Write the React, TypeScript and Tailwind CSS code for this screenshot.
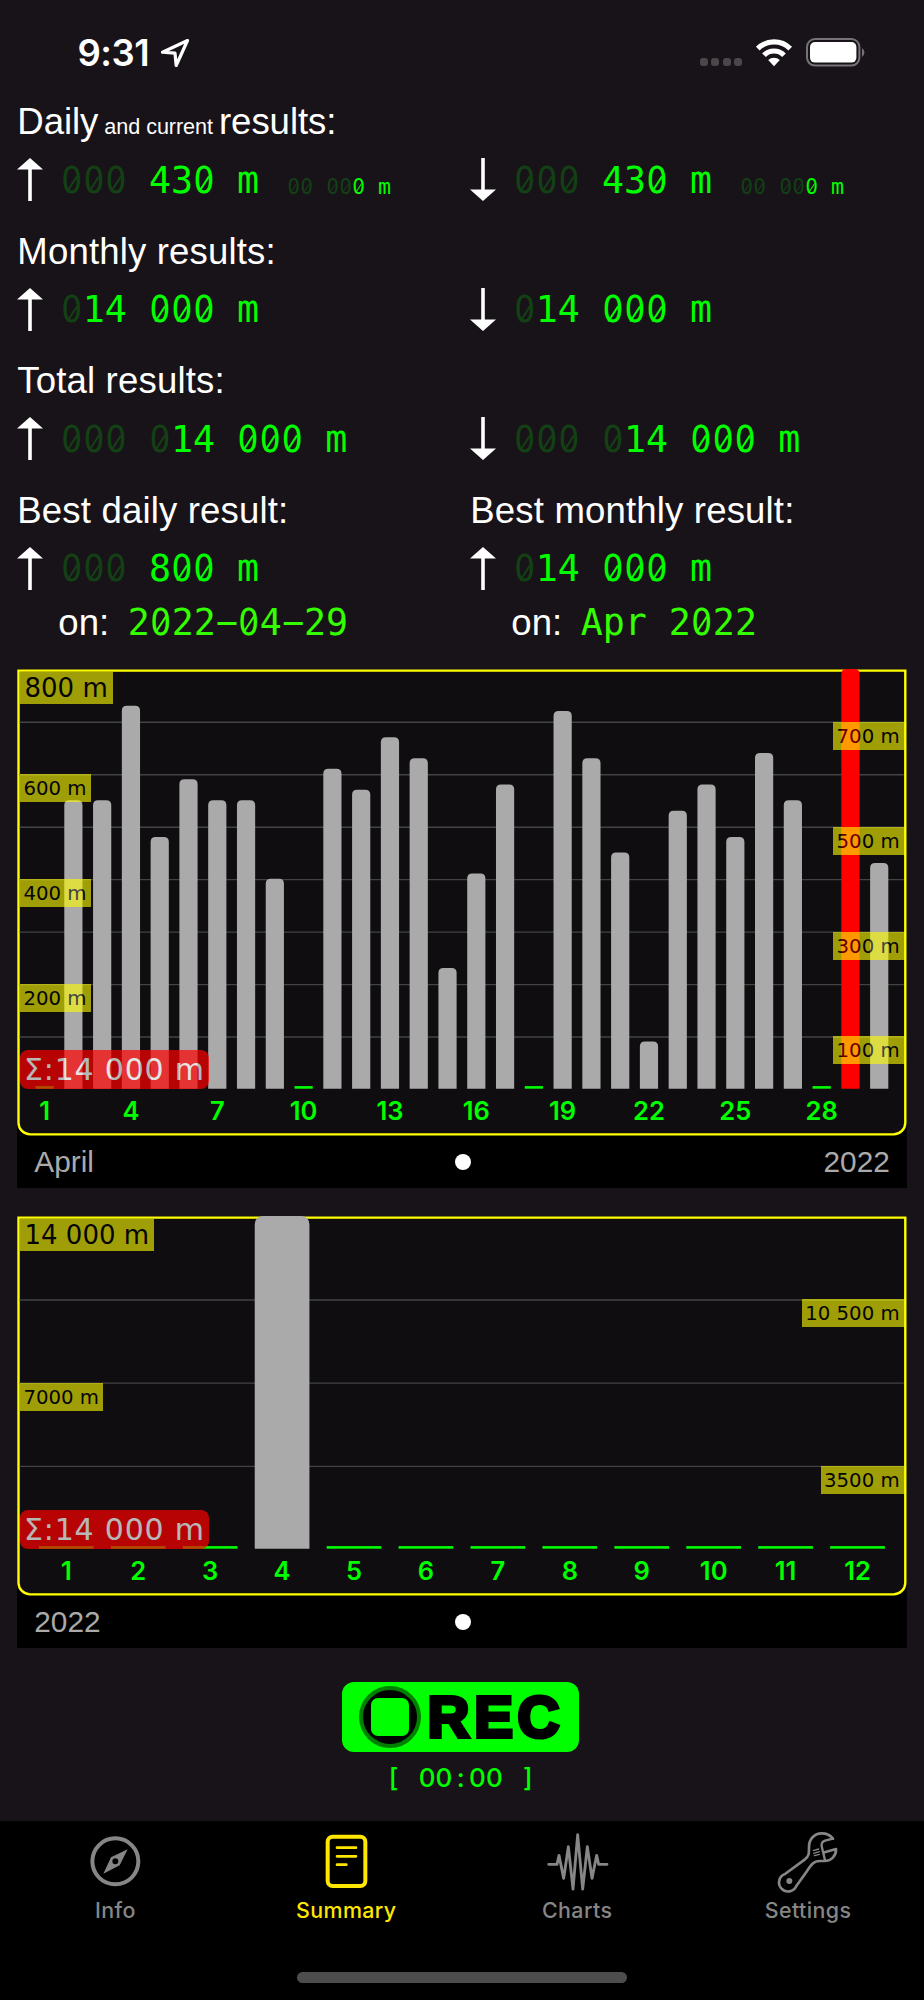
import type { ReactNode } from "react";

const DAILY = [
  0, 550, 550, 730, 480, 590, 550, 550, 400, 0, 610, 570, 670, 630, 230, 410,
  580, 0, 720, 630, 450, 90, 530, 580, 480, 640, 550, 0, 800, 430,
];
const MONTHLY = [0, 0, 0, 14000, 0, 0, 0, 0, 0, 0, 0, 0];

function StatusBar() {
  return (
    <header className="flex h-[98px] shrink-0 items-start justify-between pl-[77.5px] pr-[58px] pt-[30px]">
      <div className="flex items-center gap-[11px]">
        <span className="font-['Inter'] text-[36.5px] font-semibold leading-[46px] tracking-[-0.5px]">
          9:31
        </span>
        <svg width="30" height="30" viewBox="0 0 30 30" fill="none">
          <path
            d="M27.5 2.5 2.5 14.2 15 15.2 16.2 27.5Z"
            stroke="white"
            strokeWidth="3.2"
            strokeLinejoin="round"
          />
        </svg>
      </div>
      <div className="flex items-end pt-2">
        <div className="mr-[13px] flex gap-[3.5px] pb-[1px]">
          {[0, 1, 2, 3].map((dot) => (
            <span key={dot} className="size-2 rounded-[3px] bg-[#4a474b]" />
          ))}
        </div>
        <svg width="38" height="29" viewBox="0 0 38 29" fill="none" stroke="white" strokeWidth="5.2">
          <path d="M2.8 10.6a23 23 0 0 1 32.4 0" />
          <path d="M9 17.2a14 14 0 0 1 20 0" />
          <path d="M19 28.2 13.2 22a8.6 8.6 0 0 1 11.6 0Z" fill="white" stroke="none" />
        </svg>
        <svg className="ml-[13px]" width="60" height="29" viewBox="0 0 60 29">
          <rect x="1" y="1" width="52.4" height="26.6" rx="8" fill="none" stroke="#757377" strokeWidth="2" />
          <rect x="4" y="4" width="46.4" height="20.6" rx="5" fill="white" />
          <path d="M56 10v9a5.4 5.4 0 0 0 0-9Z" fill="#757377" />
        </svg>
      </div>
    </header>
  );
}

function Arrow({ down = false }: { down?: boolean }) {
  return (
    <svg className={down ? "shrink-0 rotate-180" : "shrink-0"} width="26" height="43" viewBox="0 0 26 43" fill="white">
      <path d="M13 0 26 11.4H14.8V43h-3.6V11.4H0Z" />
    </svg>
  );
}

/* Monospaced digits, every zero gets a slash */
function Digits({ text }: { text: string }) {
  return (
    <>
      {text.split("").map((char, i) =>
        char === "0" ? (
          <span
            key={i}
            className="relative inline-block w-[0.602em] text-center font-['DejaVu_Sans_Condensed'] before:absolute before:left-[0.27em] before:top-[0.34em] before:h-[0.5em] before:w-[0.065em] before:rotate-[33deg] before:bg-current before:content-['']"
          >
            0
          </span>
        ) : (
          char
        ),
      )}
    </>
  );
}

type ReadoutProps = { dim: string; value: string; small?: boolean };

function Readout({ dim, value, small = false }: ReadoutProps) {
  return (
    <span
      className={
        small
          ? "ml-7 translate-y-[1px] whitespace-pre font-['DejaVu_Sans_Mono'] text-[21.6px] leading-none text-[#00ff00]"
          : "whitespace-pre font-['DejaVu_Sans_Mono'] text-[36.6px] leading-none text-[#00ff00]"
      }
    >
      <span className="text-[#134014]">
        <Digits text={dim} />
      </span>
      <Digits text={value} />
    </span>
  );
}

type ResultProps = {
  title?: ReactNode;
  down?: boolean;
  dim: string;
  value: string;
  current?: boolean;
  on?: string;
};

function Result({ title, down, dim, value, current, on }: ResultProps) {
  return (
    <div className="w-[453px] shrink-0">
      <h2 className="h-[47px] whitespace-nowrap text-[36.6px] leading-[47px] tracking-[0.15px]">{title}</h2>
      <div className="flex h-[69px] items-center gap-[17.5px]">
        <Arrow down={down} />
        <div className="flex items-baseline pt-[3px]">
          <Readout dim={dim} value={value} />
          {current && <Readout dim="00 00" value="0 m" small />}
        </div>
      </div>
      {on && (
        <div className="flex h-10 items-center gap-[18.5px] pl-[41px] text-[36.6px] leading-10">
          <span>on:</span>
          <span className="whitespace-pre font-['DejaVu_Sans_Mono'] text-[#33ff00]">
            <Digits text={on} />
          </span>
        </div>
      )}
    </div>
  );
}

type Badge = { text: string; at: number; right?: boolean };

type ChartProps = {
  values: number[];
  max: number;
  height: number;
  first: number;
  pitch: number;
  barWidth: number;
  radius: number;
  lines: number;
  labelEvery: number;
  best?: number;
  badges: Badge[];
  left: string;
  right?: string;
};

function Chart(props: ChartProps) {
  const { values, max, height, first, pitch, barWidth, radius, lines, labelEvery, best, badges, left, right } = props;
  const base = height - 47;
  const y = (value: number) => base - (value / max) * base;

  return (
    <section className="w-[889.5px] bg-black">
      <div className="relative bg-[#0f0d10]" style={{ height }}>
        <svg className="block overflow-visible" width="889.5" height={height}>
          <path d={`M0 ${height - 13}V${height}H889.5V${height - 13}Z`} fill="#000" />
          <path
            d={`M1.5 1.6H888.3V${height - 13}a11.7 11.7 0 0 1 -11.7 11.7H13.2a11.7 11.7 0 0 1 -11.7 -11.7Z`}
            fill="#0f0d10"
            stroke="#ffff00"
            strokeWidth="2.4"
          />
          {Array.from({ length: lines - 1 }, (_, i) => (
            <line
              key={i}
              x1="2.7"
              x2="886.8"
              y1={(base / lines) * (i + 1) + 0.8}
              y2={(base / lines) * (i + 1) + 0.8}
              stroke="#434244"
              strokeWidth="1.4"
            />
          ))}
          {values.map((value, i) => {
            const x = first + i * pitch - barWidth / 2;
            if (value === 0) {
              return <rect key={i} x={x} y={base - 2.6} width={barWidth} height="2.6" fill="#00ff00" />;
            }
            return (
              <path
                key={i}
                d={`M${x} ${base}V${y(value) + radius}q0 ${-radius} ${radius} ${-radius}h${barWidth - radius * 2}q${radius} 0 ${radius} ${radius}V${base}Z`}
                fill={i === best ? "#ff0000" : "#aaaaaa"}
              />
            );
          })}
          {values.map((_, i) =>
            i % labelEvery === 0 ? (
              <text
                key={i}
                x={first + i * pitch}
                y={base + 31}
                textAnchor="middle"
                className="fill-[#00ff00] font-['Inter'] text-[25.5px] font-semibold"
              >
                {i + 1}
              </text>
            ) : null,
          )}
        </svg>
        {badges.map(({ text, at, right: onRight }) => (
          <span
            key={text}
            className={
              at === max
                ? "absolute left-[2.7px] h-8 whitespace-pre bg-[#ffff00] pl-[4.5px] pr-[5px] font-['DejaVu_Sans'] text-[26px] leading-8 text-black opacity-60"
                : onRight
                  ? "absolute right-[2.2px] h-7 whitespace-pre bg-[#ffff00] pl-[3.5px] pr-[5px] font-['DejaVu_Sans'] text-[19.7px] leading-[29px] text-black opacity-60"
                  : "absolute left-[2.7px] h-7 whitespace-pre bg-[#ffff00] pl-[3.5px] pr-[4px] font-['DejaVu_Sans'] text-[19.7px] leading-[29px] text-black opacity-60"
            }
            style={{ top: at === max ? 2.7 : y(at) }}
          >
            {text}
          </span>
        ))}
        <span
          className="absolute left-[2.7px] h-[39px] w-[189px] whitespace-pre rounded-lg bg-[#ff0000] pl-[4px] font-['DejaVu_Sans'] text-[30px] leading-[39px] tracking-[0.8px] text-white opacity-70"
          style={{ top: base - 39 }}
        >
          Σ:14 000 m
        </span>
      </div>
      <div className="grid h-[52px] grid-cols-3 items-center px-[17px] text-[29.8px] text-[#aaaaaa]">
        <span>{left}</span>
        <span className="ml-[2px] size-[16.6px] justify-self-center rounded-full bg-white" />
        <span className="text-right">{right}</span>
      </div>
    </section>
  );
}

function RecordButton() {
  return (
    <div className="mt-[34px] flex flex-col items-center pr-[2.6px]">
      <button className="flex h-[70px] w-[237.5px] items-center rounded-xl bg-[#00ff00] pl-[17.5px] text-black">
        <span className="flex size-[62px] shrink-0 items-center justify-center rounded-full border-4 border-[#008000] bg-black">
          <span className="size-[38px] rounded-[7px] bg-[#00ff00]" />
        </span>
        <span className="ml-[6px] text-[58px] font-bold leading-[70px] tracking-[4.8px] [-webkit-text-stroke:4px_black]">
          REC
        </span>
      </button>
      <div className="mt-[8.5px] flex font-['Inter'] text-[26px] font-medium leading-[36px] text-[#00ff00]">
        {"[ 00:00 ]".split("").map((char, i) => (
          <span key={i} className="w-[16.8px] whitespace-pre text-center">
            {char}
          </span>
        ))}
      </div>
    </div>
  );
}

const TABS = [
  {
    label: "Info",
    icon: (
      <>
        <circle cx="100" cy="100" r="69" strokeWidth="12" />
        <path
          d="M137 64 113 112 64 137 87 88ZM100 91a9 9 0 1 0 0 18a9 9 0 1 0 0-18Z"
          fill="currentColor"
          fillRule="evenodd"
          stroke="none"
        />
      </>
    ),
  },
  {
    label: "Summary",
    icon: (
      <>
        <rect x="44" y="26" width="113" height="148" rx="15" strokeWidth="12" />
        <path d="M72 59h57M72 85h57M72 110h28" strokeWidth="8" />
      </>
    ),
  },
  {
    label: "Charts",
    icon: (
      <path
        d="M14 109H39L45 82 59 151 73 56 87 183 101 20 116 183 130 56 144 151 158 82 164 109H189"
        strokeWidth="8.5"
      />
    ),
  },
  {
    label: "Settings",
    icon: (
      <>
        <path
          d="M174 32C166 21 154 16 140 16C118 16 102 34 102 56C102 78 102 84 90 94L30 138A27 27 0 1 0 64 174L94 132C108 110 116 99 134 99H148C170 99 184 82 183 63L149 73"
          strokeWidth="8"
        />
        <path d="M174 32 150 38Q138 42 140 55L150 97" strokeWidth="7" />
        <path d="M115 68 131 63M116 76 133 71M118 83 133 79" strokeWidth="4" />
        <circle cx="43" cy="159" r="9" fill="currentColor" stroke="none" />
      </>
    ),
  },
];

function TabBar() {
  return (
    <nav className="mt-auto flex h-[179px] shrink-0 flex-col items-center bg-black">
      <div className="grid w-full grid-cols-4 pr-[0.5px] pt-[6.5px]">
        {TABS.map(({ label, icon }) => (
          <div
            key={label}
            className={
              label === "Summary"
                ? "flex flex-col items-center text-[#ffe600]"
                : "flex flex-col items-center text-[#868686]"
            }
          >
            <svg
              width="66.7"
              height="66.7"
              viewBox="0 0 200 200"
              fill="none"
              stroke="currentColor"
              strokeLinecap="round"
              strokeLinejoin="round"
            >
              {icon}
            </svg>
            <span className="mt-[1.8px] font-['Inter'] text-[21.4px] font-medium leading-[28px] tracking-[0.4px]">
              {label}
            </span>
          </div>
        ))}
      </div>
      {/* Home indicator */}
      <div className="mb-[17px] mt-auto h-[11px] w-[330px] rounded-full bg-[#4d4d4d]" />
    </nav>
  );
}

export default function App() {
  return (
    <div className="flex h-[2000px] w-[924px] flex-col overflow-hidden bg-[#181318] font-['Liberation_Sans',sans-serif] text-white">
      <StatusBar />
      <main className="pl-[17.3px]">
        <div className="flex flex-col gap-[13.5px]">
          <div className="flex">
            <Result
              title={
                <span className="tracking-[-0.05px]">
                  Daily<span className="text-[21.6px]"> and current </span>results:
                </span>
              }
              dim="000 "
              value="430 m"
              current
            />
            <Result down dim="000 " value="430 m" current />
          </div>
          <div className="flex">
            <Result title="Monthly results:" dim="0" value="14 000 m" />
            <Result down dim="0" value="14 000 m" />
          </div>
          <div className="flex">
            <Result title="Total results:" dim="000 0" value="14 000 m" />
            <Result down dim="000 0" value="14 000 m" />
          </div>
          <div className="flex">
            <Result title="Best daily result:" dim="000 " value="800 m" on="2022−04−29" />
            <Result title="Best monthly result:" dim="0" value="14 000 m" on="Apr 2022" />
          </div>
        </div>

        <div className="mt-[26.7px] flex flex-col gap-[28.3px]">
          <Chart
            values={DAILY}
            max={800}
            height={466.7}
            first={27.6}
            pitch={28.78}
            barWidth={18.2}
            radius={5}
            lines={8}
            labelEvery={3}
            best={28}
            badges={[
              { text: "800 m", at: 800 },
              { text: "600 m", at: 600 },
              { text: "400 m", at: 400 },
              { text: "200 m", at: 200 },
              { text: "700 m", at: 700, right: true },
              { text: "500 m", at: 500, right: true },
              { text: "300 m", at: 300, right: true },
              { text: "100 m", at: 100, right: true },
            ]}
            left="April"
            right="2022"
          />
          <Chart
            values={MONTHLY}
            max={14000}
            height={379.7}
            first={49.3}
            pitch={71.93}
            barWidth={54.7}
            radius={9}
            lines={4}
            labelEvery={1}
            badges={[
              { text: "14 000 m", at: 14000 },
              { text: "7000 m", at: 7000 },
              { text: "10 500 m", at: 10500, right: true },
              { text: "3500 m", at: 3500, right: true },
            ]}
            left="2022"
          />
        </div>
      </main>
      <RecordButton />
      <TabBar />
    </div>
  );
}
